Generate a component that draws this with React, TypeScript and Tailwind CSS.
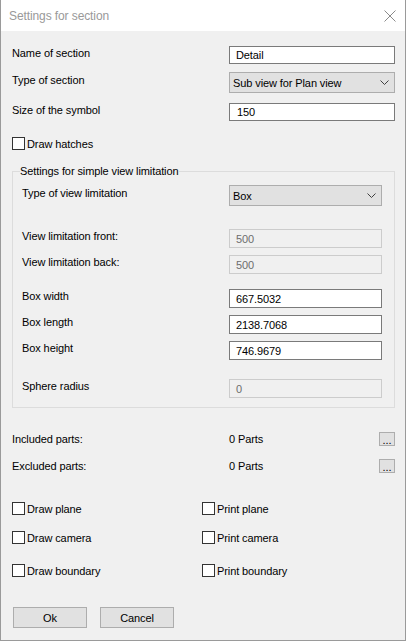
import type { ReactNode } from 'react'

const font = { fontFamily: '"Liberation Sans", Arial, sans-serif' }

function Chevron() {
  return (
    <svg width="9" height="5" viewBox="0 0 9 5" className="shrink-0">
      <path d="M0.5 0.5 L4.5 4.5 L8.5 0.5" fill="none" stroke="#404040" strokeWidth="1" />
    </svg>
  )
}

function TextBox({ value, width, disabled }: { value: string; width: string; disabled?: boolean }) {
  return (
    <div
      className={`${width} h-[19px] flex items-center pl-[6px] border ${
        disabled ? 'border-[#cccccc] bg-[#f0f0f0] text-[#6d6d6d]' : 'border-[#7a7a7a] bg-white text-black'
      }`}
    >
      {value}
    </div>
  )
}

function Select({ value, width }: { value: string; width: string }) {
  return (
    <div className={`${width} h-[21px] flex items-center justify-between pl-[3px] pr-[5px] border border-[#adadad] bg-[#e1e1e1] text-black`}>
      <span>{value}</span>
      <Chevron />
    </div>
  )
}

// label sits a few px above the middle of its control, as in the WinForms dialog
function Row({ label, labelWidth, className, children }: { label: string; labelWidth: string; className: string; children: ReactNode }) {
  return (
    <div className={`flex items-center ${className}`}>
      <span className={`${labelWidth} shrink-0 pb-[5px] text-black`}>{label}</span>
      {children}
    </div>
  )
}

function Check({ label, className }: { label: string; className?: string }) {
  return (
    <div className={`flex items-center h-[13px] ${className ?? ''}`}>
      <span className="w-[13px] h-[13px] border border-[#333333] bg-white shrink-0" />
      <span className="ml-[2px] text-black">{label}</span>
    </div>
  )
}

function DotsButton() {
  return (
    <div className="w-[16px] h-[14px] border border-[#adadad] bg-[#e1e1e1] flex items-end justify-center text-[11px] leading-[10px] text-black">
      ...
    </div>
  )
}

export default function App() {
  return (
    <div
      style={font}
      className="w-[406px] h-[641px] flex flex-col border-l border-r border-b border-[#9a9a9a] bg-[#f0f0f0] text-[11px] leading-[16px] tracking-[-0.1px] select-none"
    >
      <div className="h-[31px] shrink-0 bg-white flex items-center justify-between pl-[8px] pr-[9px]">
        <span className="text-[#999999] text-[12px]">Settings for section</span>
        <svg width="12" height="12" viewBox="0 0 12 12">
          <path d="M0.5 0.5 L11.5 11.5 M11.5 0.5 L0.5 11.5" stroke="#8a8a8a" strokeWidth="1" />
        </svg>
      </div>

      <div className="flex flex-col pl-[11px]">
        <Row label="Name of section" labelWidth="w-[217px]" className="mt-[15px] h-[18px]">
          <div className="w-[166px] h-[18px] flex items-center pl-[6px] border border-[#7a7a7a] bg-white">Detail</div>
        </Row>
        <Row label="Type of section" labelWidth="w-[217px]" className="mt-[8px] h-[21px]">
          <Select value="Sub view for Plan view" width="w-[166px]" />
        </Row>
        <Row label="Size of the symbol" labelWidth="w-[217px]" className="mt-[10px] h-[18px]">
          <div className="w-[166px] h-[18px] flex items-center pl-[7px] border border-[#7a7a7a] bg-white">150</div>
        </Row>

        <Check label="Draw hatches" className="mt-[16px]" />

        <fieldset className="mt-[13px] w-[383px] border border-[#dcdcdc] pl-[9px] pb-[9px]">
          <legend className="ml-[-2px] px-0 text-black">Settings for simple view limitation</legend>
          <Row label="Type of view limitation" labelWidth="w-[207px]" className="mt-[6px] h-[21px]">
            <Select value="Box" width="w-[153px]" />
          </Row>
          <Row label="View limitation front:" labelWidth="w-[207px]" className="mt-[23px] h-[19px]">
            <TextBox value="500" width="w-[153px]" disabled />
          </Row>
          <Row label="View limitation back:" labelWidth="w-[207px]" className="mt-[7px] h-[19px]">
            <TextBox value="500" width="w-[153px]" disabled />
          </Row>
          <Row label="Box width" labelWidth="w-[207px]" className="mt-[15px] h-[19px]">
            <TextBox value="667.5032" width="w-[153px]" />
          </Row>
          <Row label="Box length" labelWidth="w-[207px]" className="mt-[7px] h-[19px]">
            <TextBox value="2138.7068" width="w-[153px]" />
          </Row>
          <Row label="Box height" labelWidth="w-[207px]" className="mt-[7px] h-[19px]">
            <TextBox value="746.9679" width="w-[153px]" />
          </Row>
          <Row label="Sphere radius" labelWidth="w-[207px]" className="mt-[19px] h-[19px]">
            <TextBox value="0" width="w-[153px]" disabled />
          </Row>
        </fieldset>

        <div className="mt-[24px] flex items-center h-[14px] text-black">
          <span className="w-[217px]">Included parts:</span>
          <span className="w-[150px]">0 Parts</span>
          <DotsButton />
        </div>
        <div className="mt-[13px] flex items-center h-[14px] text-black">
          <span className="w-[217px]">Excluded parts:</span>
          <span className="w-[150px]">0 Parts</span>
          <DotsButton />
        </div>

        <div className="mt-[29px] flex">
          <Check label="Draw plane" className="w-[190px]" />
          <Check label="Print plane" />
        </div>
        <div className="mt-[16px] flex">
          <Check label="Draw camera" className="w-[190px]" />
          <Check label="Print camera" />
        </div>
        <div className="mt-[20px] flex">
          <Check label="Draw boundary" className="w-[190px]" />
          <Check label="Print boundary" />
        </div>

        <div className="mt-[30px] ml-[1px] flex gap-[13px]">
          <div className="w-[74px] h-[21px] border border-[#adadad] bg-[#e1e1e1] flex items-center justify-center text-black">Ok</div>
          <div className="w-[74px] h-[21px] border border-[#adadad] bg-[#e1e1e1] flex items-center justify-center text-black">Cancel</div>
        </div>
      </div>
    </div>
  )
}
